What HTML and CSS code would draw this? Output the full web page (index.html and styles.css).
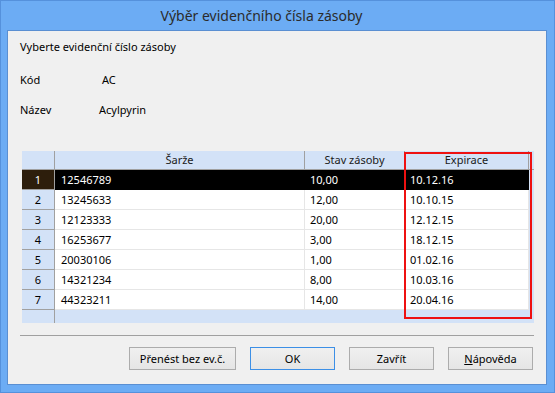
FILE: index.html
```html
<!DOCTYPE html>
<html>
<head>
<meta charset="utf-8">
<link rel="stylesheet" href="styles.css">
<title>Výběr evidenčního čísla zásoby</title>
</head>
<body>

<div class="window">
  <div class="titlebar">Výběr evidenčního čísla zásoby</div>

  <div class="client">
    <p class="prompt">Vyberte evidenční číslo zásoby</p>

    <div class="field field-code">
      <span class="label">Kód</span>
      <span class="value code">AC</span>
    </div>
    <div class="field field-name">
      <span class="label">Název</span>
      <span class="value">Acylpyrin</span>
    </div>

    <div class="grid-wrap">
      <div class="grid">
        <div class="hd corner"></div>
        <div class="hd">Šarže</div>
        <div class="hd">Stav zásoby</div>
        <div class="hd">Expirace</div>
        <div class="hd-fill"></div>

        <div class="rh sel">1</div>
        <div class="cell sel">12546789</div>
        <div class="cell sel">10,00</div>
        <div class="cell sel">10.12.16</div>
        <div class="fill"></div>

        <div class="rh">2</div>
        <div class="cell">13245633</div>
        <div class="cell">12,00</div>
        <div class="cell">10.10.15</div>
        <div class="fill"></div>

        <div class="rh">3</div>
        <div class="cell">12123333</div>
        <div class="cell">20,00</div>
        <div class="cell">12.12.15</div>
        <div class="fill"></div>

        <div class="rh">4</div>
        <div class="cell">16253677</div>
        <div class="cell">3,00</div>
        <div class="cell">18.12.15</div>
        <div class="fill"></div>

        <div class="rh">5</div>
        <div class="cell">20030106</div>
        <div class="cell">1,00</div>
        <div class="cell">01.02.16</div>
        <div class="fill"></div>

        <div class="rh">6</div>
        <div class="cell">14321234</div>
        <div class="cell">8,00</div>
        <div class="cell">10.03.16</div>
        <div class="fill"></div>

        <div class="rh">7</div>
        <div class="cell">44323211</div>
        <div class="cell">14,00</div>
        <div class="cell">20.04.16</div>
        <div class="fill"></div>

        <div class="rh empty"></div>
        <div class="bottom-fill"></div>
      </div>
      <div class="highlight"></div>
    </div>

    <div class="separator"></div>

    <div class="buttons">
      <button class="btn btn-wide">Přenést bez ev.č.</button>
      <button class="btn btn-default">OK</button>
      <button class="btn">Zavřít</button>
      <button class="btn"><u>N</u>ápověda</button>
    </div>
  </div>
</div>

</body>
</html>
```

FILE: styles.css
```css
html, body { margin: 0; padding: 0; }
body { font-family: "Noto Sans", "Open Sans", sans-serif; font-size: 11px;
       color: #000000; background-color: #6cacf4; }

.window { width: 555px; height: 393px; box-sizing: border-box;
          border: 1px solid #5591dc; display: flex; flex-direction: column; }

.titlebar { height: 29px; line-height: 29px; text-align: center;
            padding-right: 32px; font-size: 14px; color: #2b2b2b; }

.client { margin: 0 7px 7px 6px; flex: 1; background-color: #f0f0f0;
          border: 1px solid #5a8fd2; display: flex; flex-direction: column; }

.prompt { margin: 8px 0 0 12px; height: 16px; line-height: 16px; }

.field { display: flex; height: 16px; line-height: 16px; margin-left: 12px; }
.field-code { margin-top: 17px; }
.field-name { margin-top: 14px; }
.label { width: 79px; }
.code { padding-left: 3px; }

/* data grid */
.grid-wrap { position: relative; margin: 33px 0 0 14px; width: 512px; height: 172px; }
.grid { display: grid; height: 100%; background-color: #d3e2f7;
        grid-template-columns: 33px 250px 100px 124px 5px;
        grid-template-rows: 19px repeat(7, 20px) 1fr; }

.hd, .rh, .cell { box-sizing: border-box; white-space: nowrap; overflow: hidden; }

.hd { background-color: #d3e2f7; text-align: center; line-height: 18px;
      border-right: 1px solid #a0a0a0; border-bottom: 1px solid #a0a0a0; color: #1a1a1a; }
.hd-fill { border-bottom: 1px solid #a0a0a0; }

.rh { background-color: #d3e2f7; text-align: center; line-height: 19px;
      border-right: 1px solid #a0a0a0; border-bottom: 1px solid #a0a0a0; }
.rh.empty { border-bottom: none; }

.cell { background-color: #ffffff; line-height: 19px; padding-left: 5px;
        border-right: 1px solid #e6e6e6; border-bottom: 1px solid #e6e6e6; }
.cell:nth-child(5n+2) { padding-left: 6px; }

.sel { background-color: #000000; color: #ffffff; border-bottom-color: #000000;
       border-right-color: #000000; }
.rh.sel { background-color: #2d1e0c; border-bottom-color: #a0a0a0; border-right-color: #a0a0a0; }

.bottom-fill { grid-column: 2 / 6; }

.highlight { position: absolute; left: 382px; top: 1px; width: 128px; height: 167px;
             box-sizing: border-box; border: 2px solid #ee1111; }

.separator { margin: 12px 12px 0 12px; height: 1px; background-color: #a0a0a0; }

/* buttons */
.buttons { display: flex; justify-content: flex-end; gap: 14px;
           margin: 11px 13px 0 0; }
.btn { width: 85px; height: 23px; padding: 0; font-family: inherit; font-size: 11px;
       color: #000000; border: 1px solid #acacac;
       background: linear-gradient(#f0f0f0, #e5e5e5); }
.btn-wide { width: 107px; }
.btn-default { border-color: #3c8fe6; }
```
